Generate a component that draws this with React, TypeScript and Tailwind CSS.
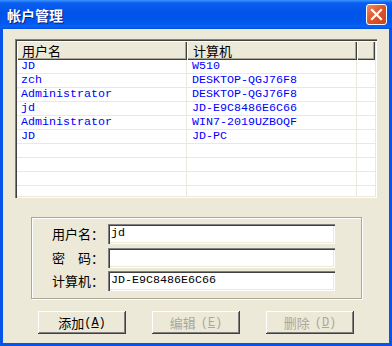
const cjk = "font-['Noto_Sans_CJK_SC',sans-serif]";
const mono = "font-['Liberation_Mono','Noto_Sans_CJK_SC',monospace]";

const rows: [string, string][] = [
  ["JD", "W510"],
  ["zch", "DESKTOP-QGJ76F8"],
  ["Administrator", "DESKTOP-QGJ76F8"],
  ["jd", "JD-E9C8486E6C66"],
  ["Administrator", "WIN7-2019UZBOQF"],
  ["JD", "JD-PC"],
  ["", ""],
  ["", ""],
  ["", ""],
  ["", ""],
];

const sunken =
  "shadow-[inset_1px_1px_#808080,inset_2px_2px_#404040,inset_-1px_-1px_#ffffff,inset_-2px_-2px_#ece9d8]";
const raised =
  "shadow-[inset_-1px_-1px_#404040,inset_1px_1px_#ffffff,inset_-2px_-2px_#808080]";

function Field({ label, value }: { label: string; value: string }) {
  return (
    <div className="flex items-center">
      <span className={`w-[56px] text-[13px] leading-[20px] text-black ${cjk}`}>{label}</span>
      <div
        className={`w-[227px] h-[20px] bg-white pl-[3px] flex items-center text-[11.67px] leading-none text-black ${mono} ${sunken}`}
      >
        {value}
      </div>
    </div>
  );
}

function Button({ label, hot, disabled }: { label: string; hot: string; disabled?: boolean }) {
  return (
    <div
      className={`w-[88px] h-[23px] flex items-center justify-center bg-[#ece9d8] leading-none ${raised} ${
        disabled ? "text-[#aca899]" : "text-black"
      }`}
    >
      <span className={`text-[13px] leading-none ${cjk}`}>{label}</span>
      <span className={`text-[12px] leading-none ${mono} ${disabled ? "ml-[5px]" : ""}`}>
        (<span className="underline">{hot}</span>)
      </span>
    </div>
  );
}

export default function App() {
  return (
    <div className="w-[392px] h-[346px] flex flex-col bg-[#0654e8] overflow-hidden">
      {/* title bar */}
      <div className="h-[29px] shrink-0 flex items-center justify-between pl-[7px] pr-[5px] bg-[linear-gradient(to_bottom,#3d95ff_0%,#0a5ef0_10%,#0053e8_45%,#0058ee_80%,#0a62f5_92%,#0050e0_100%)]">
        <span className={`text-[14px] font-bold text-white leading-none [text-shadow:1px_1px_#0a1a80] ${cjk}`}>
          帐户管理
        </span>
        <div className="w-[21px] h-[21px] rounded-[3px] border border-white bg-[linear-gradient(135deg,#ef8a66_0%,#e0532a_50%,#c7431d_100%)] flex items-center justify-center">
          <svg width="13" height="13" viewBox="0 0 13 13">
            <path d="M2 2 L11 11 M11 2 L2 11" stroke="#ffffff" strokeWidth="2.2" strokeLinecap="square" />
          </svg>
        </div>
      </div>

      {/* body */}
      <div className="flex-1 mx-[3px] mb-[3px] bg-[#ece9d8] flex flex-col pt-[10px]">
        {/* list view */}
        <div className={`ml-[12px] w-[362px] h-[159px] bg-white p-[2px] overflow-hidden ${sunken}`}>
          <div className="h-full overflow-hidden">
            <div className={`flex h-[19px] text-[13px] leading-[17px] text-black ${cjk}`}>
              <div className="w-[170px] pl-[5px] pt-[1px] bg-[#ece9d8] shadow-[inset_1px_1px_#ffffff,inset_-1px_-1px_#404040,inset_-2px_-2px_#aca899]">
                用户名
              </div>
              <div className="w-[170px] pl-[6px] pt-[1px] bg-[#ece9d8] shadow-[inset_1px_1px_#ffffff,inset_-1px_-1px_#404040,inset_-2px_-2px_#aca899]">
                计算机
              </div>
              <div className="flex-1 bg-[#ece9d8] shadow-[inset_1px_1px_#ffffff,inset_-1px_-1px_#404040,inset_-2px_-2px_#aca899]" />
            </div>
            {rows.map(([u, c], i) => (
              <div
                key={i}
                className={`flex h-[14px] border-b border-[#ebe9dc] text-[11.67px] leading-[13px] text-[#0000ff] ${mono}`}
              >
                <div className="w-[170px] pl-[4px] border-r border-[#ebe9dc]">{u}</div>
                <div className="w-[170px] pl-[5px] border-r border-[#ebe9dc]">{c}</div>
                <div className="flex-1" />
              </div>
            ))}
          </div>
        </div>

        {/* group box */}
        <div className="ml-[28px] mt-[19px] w-[331px] h-[82px] border border-[#aca899] shadow-[inset_1px_1px_#ffffff,1px_1px_#ffffff] pt-[6px] pl-[20px] flex flex-col gap-[3.5px]">
          <Field label="用户名：" value="jd" />
          <Field label="密　码：" value="" />
          <Field label="计算机：" value="JD-E9C8486E6C66" />
        </div>

        {/* buttons */}
        <div className="ml-[35px] mt-[12px] flex gap-[26px]">
          <Button label="添加" hot="A" />
          <Button label="编辑" hot="E" disabled />
          <Button label="删除" hot="D" disabled />
        </div>
      </div>
    </div>
  );
}
